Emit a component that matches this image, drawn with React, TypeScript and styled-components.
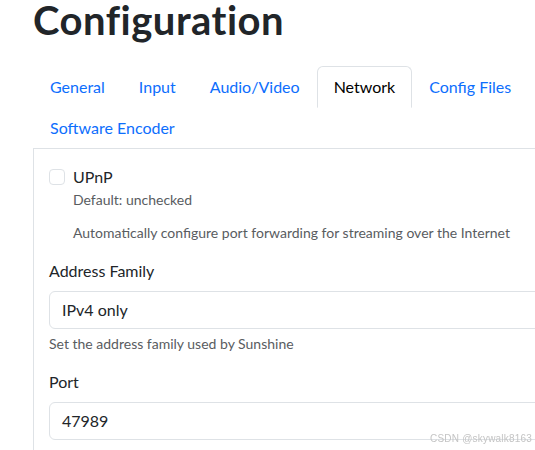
import React from "react";
import styled, { createGlobalStyle } from "styled-components";

const Global = createGlobalStyle`
  html, body { margin: 0; padding: 0; overflow: hidden; background: #fff; }
  body { font-family: "Lato", "Noto Sans", sans-serif; color: #212529; }
  * { box-sizing: border-box; }
`;

const Page = styled.div`
  width: 600px;
  padding-left: 33px;
  height: 450px;
`;

const Title = styled.h1`
  margin: 0 0 26px 0;
  font-size: 40px;
  font-weight: 700;
  line-height: 40px;
  letter-spacing: 0.5px;
  color: #212529;
`;

const Tabs = styled.ul`
  list-style: none;
  margin: 0;
  padding: 0;
  display: flex;
  flex-wrap: wrap;
  width: 540px;
  border-bottom: 1px solid #dee2e6;
`;

const Tab = styled.li<{ $active?: boolean }>`
  margin-bottom: -1px;
  padding: 8px 16px;
  font-size: 16px;
  line-height: 24px;
  border: 1px solid ${(p) => (p.$active ? "#dee2e6" : "transparent")};
  border-bottom-color: ${(p) => (p.$active ? "#fff" : "transparent")};
  border-top-left-radius: 6px;
  border-top-right-radius: 6px;
  color: ${(p) => (p.$active ? "#000" : "#0d6efd")};
  background: ${(p) => (p.$active ? "#fff" : "transparent")};
  cursor: pointer;
`;

const Panel = styled.div`
  border: 1px solid #dee2e6;
  border-top: none;
  padding: 16px 15px;
`;

const CheckRow = styled.div`
  display: flex;
  align-items: flex-start;
  gap: 8px;
`;

const Box = styled.span`
  width: 16px;
  height: 16px;
  margin-top: 4px;
  border: 1px solid #dee2e6;
  border-radius: 4px;
  background: #fff;
  flex: none;
`;

const CheckBody = styled.div`
  display: flex;
  flex-direction: column;
`;

const CheckLabel = styled.div`
  font-size: 16px;
  line-height: 24px;
`;

const Help = styled.div<{ $gap?: number }>`
  font-size: 14px;
  line-height: 21px;
  color: #595c5f;
  margin-top: ${(p) => p.$gap ?? 4}px;
`;

const Field = styled.div`
  margin-top: 16px;
`;

const Label = styled.div`
  font-size: 16px;
  line-height: 24px;
  margin-bottom: 8px;
`;

const Control = styled.div`
  height: 38px;
  border: 1px solid #dee2e6;
  border-radius: 6px;
  padding: 6px 12px;
  font-size: 16px;
  line-height: 24px;
  color: #212529;
  background: #fff;
`;

const Watermark = styled.div`
  position: fixed;
  right: 3px;
  bottom: 6px;
  font-size: 10px;
  color: #c4c4c4;
  font-family: "Liberation Sans", Arial, sans-serif;
  letter-spacing: 0.2px;
`;

const tabs = ["General", "Input", "Audio/Video", "Network", "Config Files", "Software Encoder"];

export default function App() {
  return (
    <>
      <Global />
      <Page>
        <Title>Configuration</Title>
        <Tabs>
          {tabs.map((t) => (
            <Tab key={t} $active={t === "Network"}>
              {t}
            </Tab>
          ))}
        </Tabs>
        <Panel>
          <CheckRow>
            <Box />
            <CheckBody>
              <CheckLabel>UPnP</CheckLabel>
              <Help $gap={0}>Default: unchecked</Help>
              <Help $gap={12}>Automatically configure port forwarding for streaming over the Internet</Help>
            </CheckBody>
          </CheckRow>
          <Field>
            <Label>Address Family</Label>
            <Control>IPv4 only</Control>
            <Help $gap={4}>Set the address family used by Sunshine</Help>
          </Field>
          <Field>
            <Label>Port</Label>
            <Control>47989</Control>
          </Field>
        </Panel>
      </Page>
      <Watermark>CSDN @skywalk8163</Watermark>
    </>
  );
}
